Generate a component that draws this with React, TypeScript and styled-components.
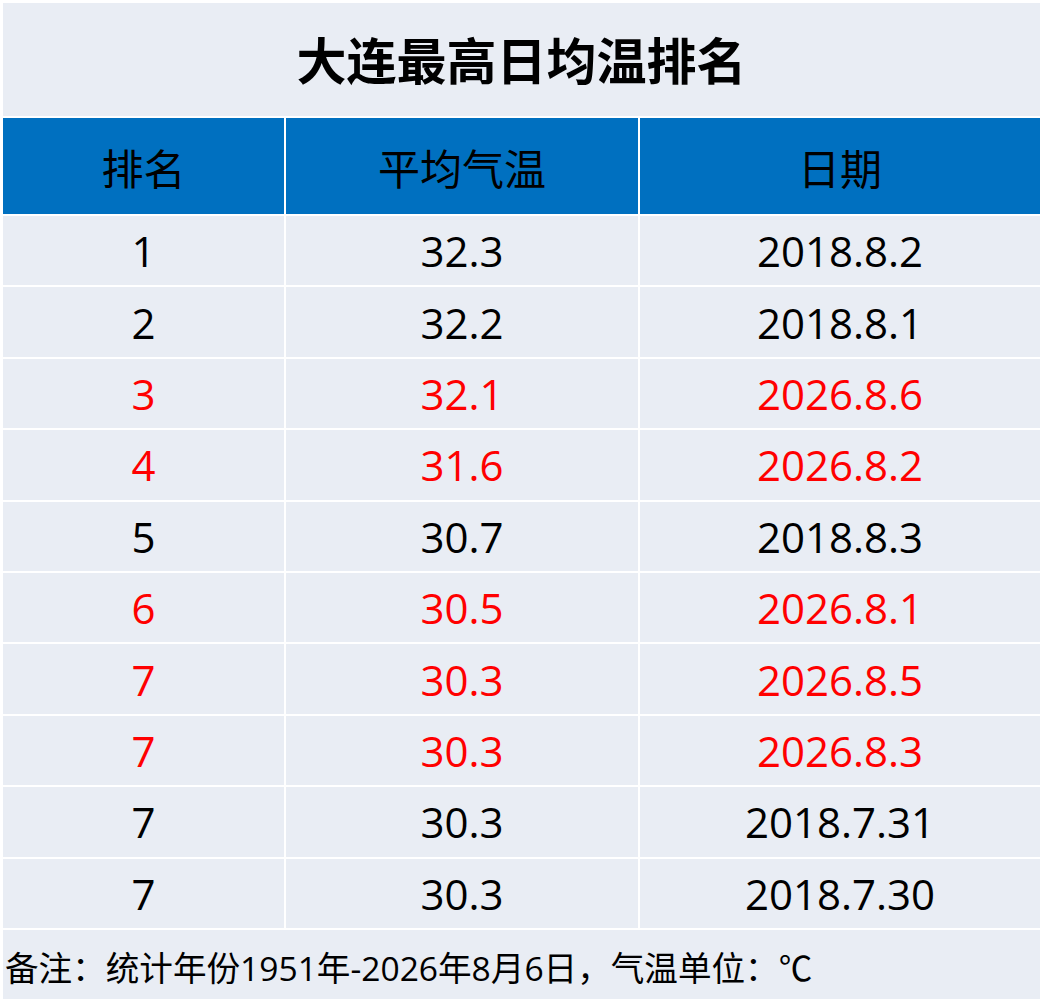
import React from "react";
import styled, { createGlobalStyle } from "styled-components";

const Global = createGlobalStyle`
  html, body { margin: 0; padding: 0; background: #ffffff; }
  body { font-family: "Open Sans", "Noto Sans CJK SC", sans-serif; }
`;

const Page = styled.div`
  width: 1044px;
  height: 1007px;
  padding: 3px 4px 7px 3px;
  box-sizing: border-box;
  background: #ffffff;
`;

const Sheet = styled.div`
  display: grid;
  grid-template-columns: 281px 352px 400px;
  grid-template-rows: 113px 96px repeat(10, 69.4px) 69px;
  gap: 2px;
  background: #ffffff;
`;

const Title = styled.div`
  grid-column: 1 / -1;
  background: #e9edf4;
  display: flex;
  align-items: center;
  justify-content: center;
  font-family: "Noto Sans CJK SC", sans-serif;
  font-weight: 700;
  font-size: 50px;
  color: #000;
  padding-bottom: 4px;
`;

const HeadCell = styled.div`
  background: #0070c0;
  display: flex;
  align-items: center;
  justify-content: center;
  font-family: "Noto Sans CJK SC", sans-serif;
  font-size: 42px;
  color: #000;
`;

const Cell = styled.div<{ $hot: boolean }>`
  background: #e9edf4;
  display: flex;
  align-items: center;
  justify-content: center;
  font-family: "Open Sans", "Noto Sans CJK SC", sans-serif;
  font-size: 42px;
  color: ${(p) => (p.$hot ? "#ff0000" : "#000000")};
`;

const Note = styled.div`
  grid-column: 1 / -1;
  background: #e9edf4;
  display: flex;
  align-items: center;
  padding-left: 2px;
  padding-top: 5px;
  box-sizing: border-box;
  font-family: "Open Sans", "Noto Sans CJK SC", sans-serif;
  font-size: 33.6px;
  color: #000;
`;

const rows: [string, string, string, boolean][] = [
  ["1", "32.3", "2018.8.2", false],
  ["2", "32.2", "2018.8.1", false],
  ["3", "32.1", "2026.8.6", true],
  ["4", "31.6", "2026.8.2", true],
  ["5", "30.7", "2018.8.3", false],
  ["6", "30.5", "2026.8.1", true],
  ["7", "30.3", "2026.8.5", true],
  ["7", "30.3", "2026.8.3", true],
  ["7", "30.3", "2018.7.31", false],
  ["7", "30.3", "2018.7.30", false],
];

export default function App() {
  return (
    <Page>
      <Global />
      <Sheet>
        <Title>大连最高日均温排名</Title>
        <HeadCell>排名</HeadCell>
        <HeadCell>平均气温</HeadCell>
        <HeadCell>日期</HeadCell>
        {rows.map((r, i) => (
          <React.Fragment key={i}>
            <Cell $hot={r[3]}>{r[0]}</Cell>
            <Cell $hot={r[3]}>{r[1]}</Cell>
            <Cell $hot={r[3]}>{r[2]}</Cell>
          </React.Fragment>
        ))}
        <Note>备注：统计年份1951年-2026年8月6日，气温单位：℃</Note>
      </Sheet>
    </Page>
  );
}
